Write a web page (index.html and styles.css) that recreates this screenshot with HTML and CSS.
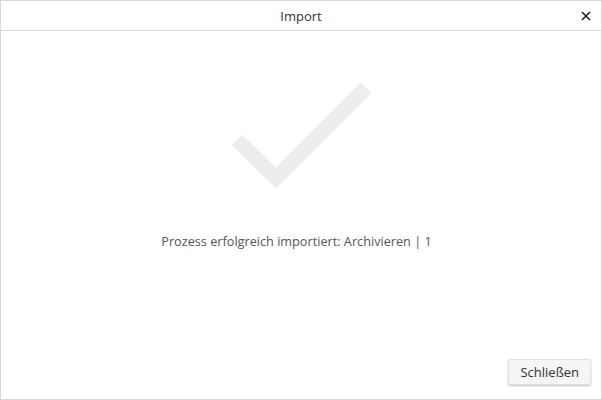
FILE: index.html
```html
<!DOCTYPE html>
<html lang="de">
<head>
    <meta charset="UTF-8">
    <title>Import</title>
    <link rel="stylesheet" href="styles.css">
</head>
<body>

<div class="dialog">
    <div class="dialog-header">
        <span class="dialog-title">Import</span>
        <span class="dialog-close">
            <svg width="10" height="10" viewBox="0 0 10 10">
                <path d="M1 1 L9 9 M9 1 L1 9" stroke="#222" stroke-width="1.6" fill="none"/>
            </svg>
        </span>
    </div>

    <div class="dialog-body">
        <svg class="check" width="160" height="120" viewBox="0 0 160 120">
            <polyline points="18,64 57,102 147,12" stroke="#ededed" stroke-width="15" fill="none"/>
        </svg>
        <div class="message">Prozess erfolgreich importiert: Archivieren | 1</div>
    </div>

    <div class="dialog-footer">
        <button class="btn">Schließen</button>
    </div>
</div>

</body>
</html>
```

FILE: styles.css
```css
body {
    margin: 0;
    font-family: "Open Sans", Arial, sans-serif;
    background-color: #fff;
}
.dialog {
    width: 600px;
    height: 398px;
    border: 1px solid #d9d9d9;
    display: flex;
    flex-direction: column;
}
.dialog-header {
    height: 29px;
    border-bottom: 1px solid #d9d9d9;
    display: flex;
    align-items: center;
    justify-content: center;
    position: relative;
}
.dialog-title {
    font-size: 13px;
    color: #333;
}
.dialog-close {
    position: absolute;
    right: 10px;
    top: 10px;
    width: 10px;
    height: 10px;
    line-height: 0;
}
.dialog-body {
    flex: 1;
    display: flex;
    flex-direction: column;
    align-items: center;
}
.check {
    margin-top: 45px;
    margin-left: -4px;
}
.message {
    margin-top: 36px;
    margin-right: 9px;
    font-size: 12.7px;
    color: #555;
}
.dialog-footer {
    display: flex;
    justify-content: flex-end;
    padding: 0 10px 14px 0;
}
.btn {
    font-family: "Open Sans", Arial, sans-serif;
    font-size: 13px;
    color: #333;
    background-color: #f5f5f5;
    border: 1px solid #e0e0e0;
    border-radius: 3px;
    box-shadow: 0 1px 2px rgba(0, 0, 0, 0.25);
    padding: 3px 11px;
    height: 26px;
}
```
